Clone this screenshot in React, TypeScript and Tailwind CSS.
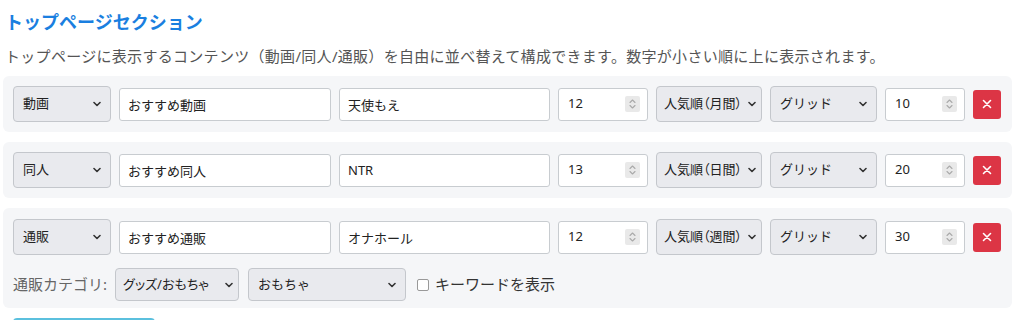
import React from "react";

const font = { fontFamily: '"Noto Sans", "Noto Sans CJK JP", sans-serif' };

const Chevron = () => (
  <svg width="8" height="6" viewBox="0 0 8 6" className="shrink-0">
    <path d="M1 1.5 L4 4.5 L7 1.5" fill="none" stroke="#333" strokeWidth="1.6" strokeLinecap="round" strokeLinejoin="round" />
  </svg>
);

const Select = ({ label, w, h = "h-[36px]", tight }: { label: string; w: string; h?: string; tight?: boolean }) => (
  <div
    className={`${w} ${h} shrink-0 flex items-center justify-between bg-[#e9eaee] border border-[#c4c7cc] rounded-[4px] text-[13px] text-[#222] ${
      tight ? "pl-[7px] pr-[5px] [font-feature-settings:'palt']" : "pl-[9px] pr-[9px]"
    }`}
  >
    <span className="whitespace-nowrap">{label}</span>
    <Chevron />
  </div>
);

const TextInput = ({ value, w }: { value: string; w: string }) => (
  <input
    readOnly
    value={value}
    className={`${w} h-[33px] shrink-0 px-[8px] bg-white border border-[#c8ccd0] rounded-[3px] text-[13px] text-[#222] outline-none`}
    style={font}
  />
);

const NumberInput = ({ value, w }: { value: string; w: string }) => (
  <div className={`${w} h-[33px] shrink-0 flex items-center bg-white border border-[#c8ccd0] rounded-[3px] pl-[9px] pr-[7px]`}>
    <input readOnly value={value} className="flex-1 min-w-0 bg-transparent text-[13px] text-[#222] outline-none" style={font} />
    <span className="w-[15px] h-[16px] bg-[#e9e9e9] rounded-[2px] flex items-center justify-center">
      <svg width="9" height="12" viewBox="0 0 9 12">
        <path d="M2 4.5 L4.5 2 L7 4.5 M2 7.5 L4.5 10 L7 7.5" fill="none" stroke="#aaa" strokeWidth="1.1" strokeLinecap="round" strokeLinejoin="round" />
      </svg>
    </span>
  </div>
);

const rows = [
  { type: "動画", title: "おすすめ動画", kw: "天使もえ", n: "12", sort: "人気順（月間）", order: "10" },
  { type: "同人", title: "おすすめ同人", kw: "NTR", n: "13", sort: "人気順（日間）", order: "20" },
  { type: "通販", title: "おすすめ通販", kw: "オナホール", n: "12", sort: "人気順（週間）", order: "30" },
];

const MainRow = ({ r }: { r: (typeof rows)[number] }) => (
  <div className="flex items-center gap-[8px]">
    <Select label={r.type} w="w-[98px]" />
    <TextInput value={r.title} w="w-[212px]" />
    <TextInput value={r.kw} w="w-[211px]" />
    <NumberInput value={r.n} w="w-[90px]" />
    <Select label={r.sort} w="w-[106px]" tight />
    <Select label="グリッド" w="w-[107px]" />
    <NumberInput value={r.order} w="w-[80px]" />
    <button className="w-[28px] h-[29px] shrink-0 rounded-[3px] bg-[#dc3545] flex items-center justify-center">
      <svg width="10" height="10" viewBox="0 0 10 10">
        <path d="M1.5 1.5 L8.5 8.5 M8.5 1.5 L1.5 8.5" stroke="#fff" strokeWidth="1.6" strokeLinecap="round" />
      </svg>
    </button>
  </div>
);

export default function App() {
  return (
    <div className="w-[1024px] h-[320px] overflow-hidden bg-white pl-[3px] pt-[11px]" style={font}>
      <h2 className="ml-[2px] text-[18px] leading-[22px] font-bold text-[#1a7fe0]">トップページセクション</h2>
      <p className="ml-[2px] mt-[12px] text-[15px] leading-[22px] tracking-[0.3px] text-[#555]">
        トップページに表示するコンテンツ（動画/同人/通販）を自由に並べ替えて構成できます。数字が小さい順に上に表示されます。
      </p>
      <div className="mt-[9px] w-[1009px] flex flex-col gap-[10px]">
        {rows.slice(0, 2).map((r) => (
          <div key={r.type} className="bg-[#f5f6f8] rounded-[6px] px-[10px] py-[10px]">
            <MainRow r={r} />
          </div>
        ))}
        <div className="bg-[#f5f6f8] rounded-[6px] px-[10px] pt-[11px] pb-[7px]">
          <MainRow r={rows[2]} />
          <div className="mt-[13px] flex items-center">
            <span className="text-[15px] text-[#666] mr-[8px]">通販カテゴリ:</span>
            <Select label="グッズ/おもちゃ" w="w-[124px]" h="h-[33px]" tight />
            <div className="w-[9px]" />
            <Select label="おもちゃ" w="w-[158px]" h="h-[33px]" />
            <span className="ml-[11px] w-[12px] h-[12px] border border-[#999] rounded-[2px] bg-white" />
            <span className="ml-[6px] text-[15px] text-[#333]">キーワードを表示</span>
          </div>
        </div>
      </div>
      <div className="mt-[10px] ml-[10px] w-[142px] h-[30px] border-t-2 border-[#5bc0de] rounded-t-[4px]" />
    </div>
  );
}
